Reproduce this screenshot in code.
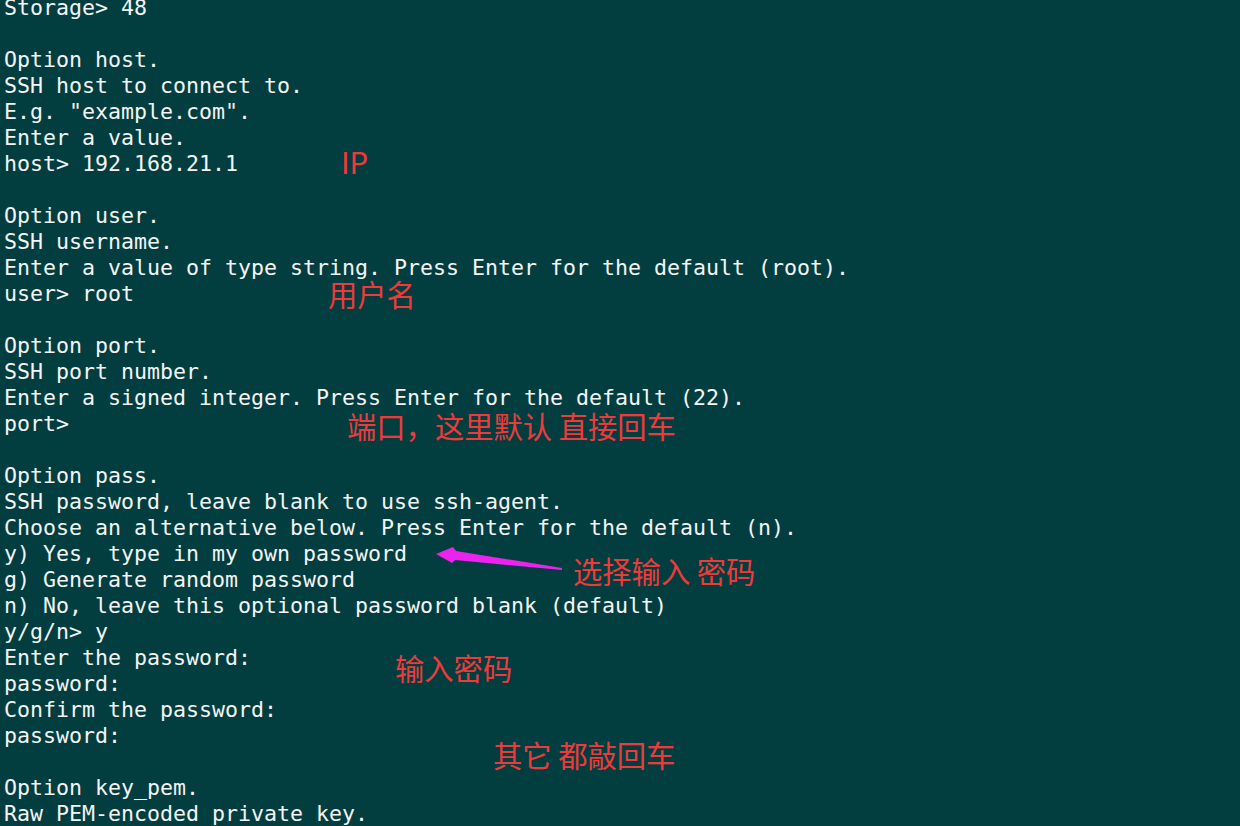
const lines = [
  "Storage> 48",
  "",
  "Option host.",
  "SSH host to connect to.",
  'E.g. "example.com".',
  "Enter a value.",
  "host> 192.168.21.1",
  "",
  "Option user.",
  "SSH username.",
  "Enter a value of type string. Press Enter for the default (root).",
  "user> root",
  "",
  "Option port.",
  "SSH port number.",
  "Enter a signed integer. Press Enter for the default (22).",
  "port>",
  "",
  "Option pass.",
  "SSH password, leave blank to use ssh-agent.",
  "Choose an alternative below. Press Enter for the default (n).",
  "y) Yes, type in my own password",
  "g) Generate random password",
  "n) No, leave this optional password blank (default)",
  "y/g/n> y",
  "Enter the password:",
  "password:",
  "Confirm the password:",
  "password:",
  "",
  "Option key_pem.",
  "Raw PEM-encoded private key.",
];

const Note = ({ className, children }: { className: string; children: string }) => (
  <div
    className={`absolute whitespace-pre text-[29.3px] leading-none text-[#f03a3a] font-['Noto_Sans_CJK_SC','Noto_Sans',sans-serif] ${className}`}
  >
    {children}
  </div>
);

const App = () => {
  return (
    <div className="relative w-full h-[826px] overflow-hidden bg-[#023e40]">
      <div className="-mt-[5px] pl-[4px] font-['DejaVu_Sans_Mono',monospace] text-[21.6px] leading-[26px] text-[#f4f4f4]">
        {lines.map((l, i) => (
          <div key={i} className="h-[26px] w-fit whitespace-pre">
            {l}
          </div>
        ))}
      </div>

      <Note className="left-[341px] top-[147px]">IP</Note>
      <Note className="left-[328px] top-[279px]">用户名</Note>
      <Note className="left-[347px] top-[411px]">端口，这里默认 直接回车</Note>
      <Note className="left-[573px] top-[556px]">选择输入 密码</Note>
      <Note className="left-[395px] top-[653px]">输入密码</Note>
      <Note className="left-[493px] top-[740px]">其它 都敲回车</Note>

      {/* arrow pointing at the "y) Yes" line */}
      <svg className="absolute left-0 top-0" width="1240" height="826">
        <polygon
          points="436,554 453,547 456,551 562,568 562,570 455,560 452,563"
          fill="#ee22ee"
        />
      </svg>
    </div>
  );
};

export default App;
